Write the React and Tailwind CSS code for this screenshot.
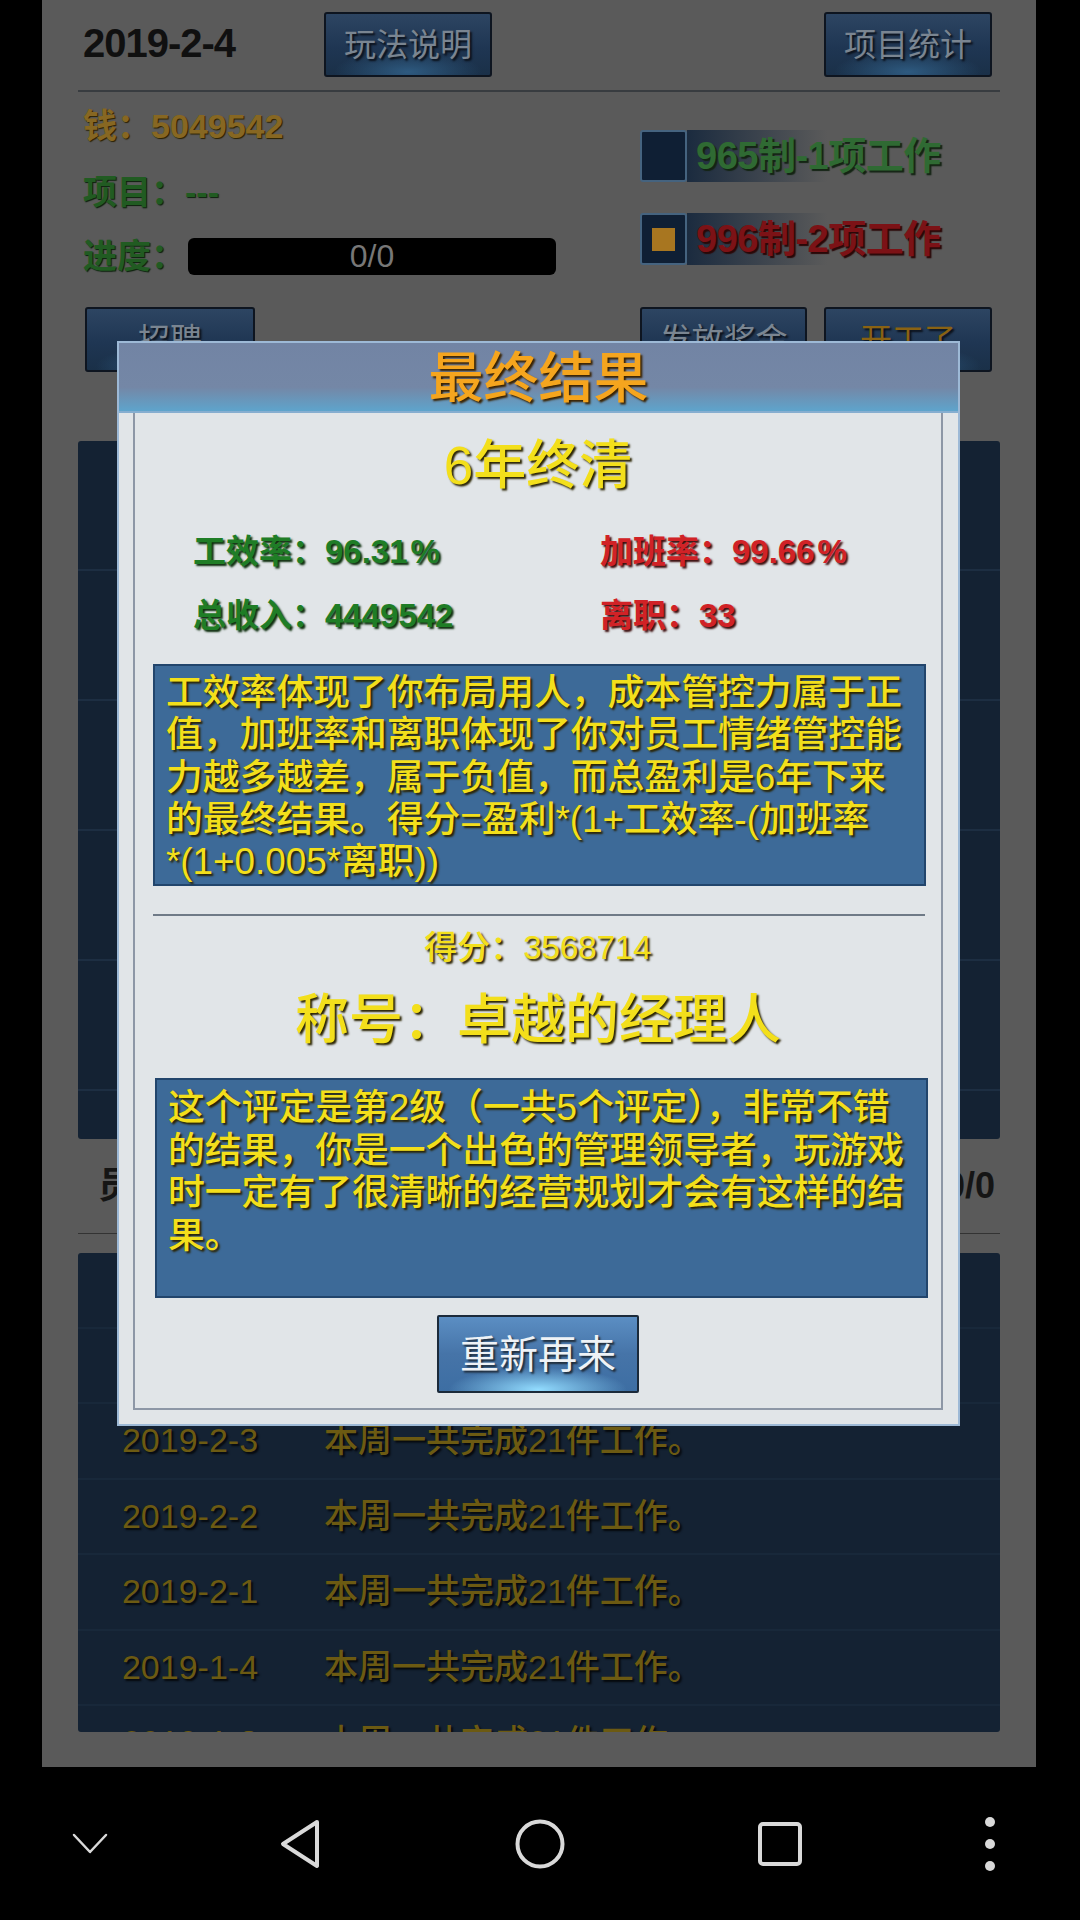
import React from "react";

const F = "font-['Liberation_Sans','Noto_Sans_CJK_SC',sans-serif]";
const YEL = "text-[#f3df1b] [text-shadow:2px_2px_2px_#2a2300]";

function DimBtn({ children, w = "w-[168px]", text = "text-[#7a8591]" }) {
  return (
    <div
      className={`${w} h-[65px] rounded-[3px] border-2 border-[#0e1520] flex items-center justify-center text-[32px] leading-none ${text} [text-shadow:2px_2px_2px_#0a0f18] [background:radial-gradient(ellipse_45%_35%_at_50%_95%,#2e5a80_0%,rgba(46,90,128,0)_100%),linear-gradient(#2d4562,#1f3653_55%,#1a3048)]`}
    >
      {children}
    </div>
  );
}

function Check({ filled, children, color, shadow }) {
  return (
    <div className="flex items-center h-[52px] relative">
      <div className="absolute left-[47px] top-0 h-[52px] w-[140px] [background:linear-gradient(90deg,#1b2b3f,rgba(90,90,90,0.2))]" />
      <div className="relative w-[47px] h-[52px] border-2 border-[#45637f] rounded-[3px] bg-[#0f1f34] flex items-center justify-center">
        {filled && <div className="w-[23px] h-[23px] bg-[#a87620]" />}
      </div>
      <div className={`relative ml-[9px] text-[38px] leading-none font-bold tracking-[-0.5px] ${color} ${shadow}`}>{children}</div>
    </div>
  );
}

function NavIcons() {
  return (
    <div className="h-[153px] flex items-center">
      <div className="w-[180px] flex justify-center">
        <svg width="36" height="22" viewBox="0 0 36 22">
          <polyline points="2,2 18,19 34,2" fill="none" stroke="#d9d9d9" strokeWidth="2.5" strokeLinejoin="round" strokeLinecap="round" />
        </svg>
      </div>
      <div className="w-[240px] flex justify-center">
        <svg width="42" height="50" viewBox="0 0 42 50">
          <path d="M38 3 L4 25 L38 47 Z" fill="none" stroke="#d9d9d9" strokeWidth="4" strokeLinejoin="round" />
        </svg>
      </div>
      <div className="w-[240px] flex justify-center">
        <svg width="50" height="50" viewBox="0 0 50 50">
          <circle cx="25" cy="25" r="22.5" fill="none" stroke="#d9d9d9" strokeWidth="4" />
        </svg>
      </div>
      <div className="w-[240px] flex justify-center">
        <svg width="44" height="44" viewBox="0 0 44 44">
          <rect x="2" y="2" width="40" height="40" rx="3" fill="none" stroke="#d9d9d9" strokeWidth="4" />
        </svg>
      </div>
      <div className="w-[180px] flex justify-center">
        <svg width="12" height="56" viewBox="0 0 12 56">
          <circle cx="6" cy="6" r="5" fill="#d9d9d9" />
          <circle cx="6" cy="28" r="5" fill="#d9d9d9" />
          <circle cx="6" cy="50" r="5" fill="#d9d9d9" />
        </svg>
      </div>
    </div>
  );
}

const logRows = [
  ["2019-2-4", "本周一共完成21件工作。"],
  ["2019-2-4", "本周一共完成21件工作。"],
  ["2019-2-3", "本周一共完成21件工作。"],
  ["2019-2-2", "本周一共完成21件工作。"],
  ["2019-2-1", "本周一共完成21件工作。"],
  ["2019-1-4", "本周一共完成21件工作。"],
  ["2019-1-3", "本周一共完成21件工作。"],
];

export default function App() {
  return (
    <div className={`w-[1080px] h-[1920px] bg-black relative overflow-hidden ${F}`}>
      {/* app area */}
      <div className="ml-[42px] w-[994px] h-[1767px] bg-[#5a5a5a] px-[36px]">
        {/* top bar */}
        <div className="flex items-start h-[90px]">
          <div className="w-[246px] pl-[5px] pt-[23px] text-[40px] leading-none font-bold text-[#101010] tracking-[-1px]">2019-2-4</div>
          <div className="mt-[12px]"><DimBtn>玩法说明</DimBtn></div>
          <div className="flex-1" />
          <div className="mt-[12px] mr-[8px]"><DimBtn>项目统计</DimBtn></div>
        </div>
        <div className="h-[2px] bg-[#383c40]" />
        {/* info */}
        <div className="h-[215px] flex">
          <div className="w-[562px] pl-[5px] flex flex-col">
            <div className="mt-[14px] h-[40px] flex items-center text-[34px] font-bold text-[#876722] [text-shadow:1px_1px_1px_#2a2000]">钱：5049542</div>
            <div className="mt-[26px] h-[40px] flex items-center text-[34px] font-bold text-[#215b22] [text-shadow:1px_1px_1px_#0c200c]">项目：---</div>
            <div className="mt-[25px] h-[38px] flex items-center">
              <span className="text-[34px] font-bold text-[#215b22] [text-shadow:1px_1px_1px_#0c200c]">进度：</span>
              <div className="ml-[3px] w-[368px] h-[37px] rounded-[6px] bg-black flex items-center justify-center text-[32px] text-[#777]">0/0</div>
            </div>
          </div>
          <div className="flex flex-col">
            <div className="mt-[38px]">
              <Check color="text-[#2f6a33]" shadow="[text-shadow:2px_2px_1px_#142414]">965制-1项工作</Check>
            </div>
            <div className="mt-[31px]">
              <Check filled color="text-[#7c1216]" shadow="[text-shadow:2px_2px_1px_#2a0808]">996制-2项工作</Check>
            </div>
          </div>
        </div>
        {/* second buttons */}
        <div className="flex h-[65px]">
          <div className="ml-[7px]"><DimBtn w="w-[170px]">招聘</DimBtn></div>
          <div className="flex-1" />
          <DimBtn w="w-[167px]">发放奖金</DimBtn>
          <div className="ml-[17px] mr-[8px]"><DimBtn w="w-[168px]" text="text-[#8a6212]">开工了</DimBtn></div>
        </div>
        {/* panel 1 */}
        <div className="mt-[69px] h-[698px] bg-[#142233] rounded-[3px] overflow-hidden flex flex-col">
          {[0, 1, 2, 3, 4, 5].map((i) => (
            <div key={i} className="h-[130px] shrink-0 border-b-2 border-[#1d2e42]" />
          ))}
        </div>
        {/* header row */}
        <div className="h-[94px] flex items-center justify-between px-[20px] pr-[5px] text-[36px] font-bold text-[#151515]">
          <span>员工</span>
          <span>0/0</span>
        </div>
        <div className="h-[1px] bg-[#333]" />
        {/* panel 2 */}
        <div className="mt-[19px] h-[479px] bg-[#142233] rounded-[3px] overflow-hidden flex flex-col">
          {logRows.map((r, i) => (
            <div key={i} className="h-[75.5px] shrink-0 flex items-center border-b-2 border-[#18283a] text-[34px] font-medium text-[#6c5a12] [text-shadow:2px_2px_2px_#05080c]">
              <div className="w-[224px] text-center">{r[0]}</div>
              <div className="ml-[22px]">{r[1]}</div>
            </div>
          ))}
        </div>
      </div>
      <NavIcons />

      {/* modal */}
      <div className="absolute left-[117px] top-[341px] w-[843px] h-[1085px] border-2 border-[#9db9d6] bg-[#e1e5e8] flex flex-col">
        <div className="h-[70px] shrink-0 flex items-center justify-center border-b-2 border-[#86aed0] [background:linear-gradient(#7284a4_0%,#7487a6_65%,#5ea4cc_100%)]">
          <span className="text-[55px] leading-none font-medium text-[#f5a51e] [text-shadow:2px_2px_2px_#3a2200] pt-[2px]">最终结果</span>
        </div>
        <div className="flex-1 ml-[14px] mr-[15px] mb-[14px] border-x-2 border-b-2 border-[#8d97a6] flex flex-col">
          <div className={`mt-[22px] h-[60px] flex items-center justify-center text-[53px] leading-none font-medium ${YEL}`}>6年终清</div>
          <div className="mt-[34px] pl-[58px] flex h-[44px] items-center text-[33px] leading-none font-bold">
            <div className="w-[407px] text-[#1f7d26] [text-shadow:2px_2px_2px_#0d2e0d]">工效率：96.31<span className="ml-[3px]">%</span></div>
            <div className="text-[#d12226] [text-shadow:2px_2px_2px_#3a0a0a]">加班率：99.66<span className="ml-[3px]">%</span></div>
          </div>
          <div className="mt-[20px] pl-[58px] flex h-[44px] items-center text-[33px] leading-none font-bold">
            <div className="w-[407px] text-[#1f7d26] [text-shadow:2px_2px_2px_#0d2e0d]">总收入：4449542</div>
            <div className="text-[#d12226] [text-shadow:2px_2px_2px_#3a0a0a]">离职：33</div>
          </div>
          <div className={`mt-[27px] ml-[18px] w-[773px] h-[222px] shrink-0 bg-[#3d6a98] border-2 border-[#22456c] pl-[11px] pt-[6px] text-[36.8px] leading-[42.3px] font-medium whitespace-nowrap ${YEL}`}>
            工效率体现了你布局用人，成本管控力属于正<br />
            值，加班率和离职体现了你对员工情绪管控能<br />
            力越多越差，属于负值，而总盈利是6年下来<br />
            的最终结果。得分=盈利*(1+工效率-(加班率<br />
            *(1+0.005*离职))
          </div>
          <div className="mt-[28px] ml-[18px] w-[772px] h-[2px] bg-[#6f7a87]" />
          <div className={`mt-[11px] h-[40px] flex items-center justify-center text-[33px] leading-none font-medium ${YEL}`}>得分：3568714</div>
          <div className={`mt-[23px] h-[60px] flex items-center justify-center text-[54px] leading-none font-medium ${YEL}`}>称号：卓越的经理人</div>
          <div className={`mt-[28px] ml-[20px] w-[773px] h-[220px] shrink-0 bg-[#3d6a98] border-2 border-[#22456c] pl-[11px] pt-[7px] text-[36.8px] leading-[42.5px] font-medium whitespace-nowrap ${YEL}`}>
            这个评定是第2级（一共5个评定），非常不错<br />
            的结果，你是一个出色的管理领导者，玩游戏<br />
            时一定有了很清晰的经营规划才会有这样的结<br />
            果。
          </div>
          <div className="mt-[17px] flex justify-center">
            <div className="w-[202px] h-[78px] border-2 border-[#1b2a3a] rounded-[2px] flex items-center justify-center text-[39px] leading-none text-[#eef2f6] [text-shadow:2px_2px_2px_#1e2a36] [background:radial-gradient(ellipse_45%_30%_at_50%_98%,#92dcff_0%,rgba(120,200,240,0)_100%),linear-gradient(#5b8ec3,#4674a8_50%,#3d6ea3)]">
              重新再来
            </div>
          </div>
        </div>
      </div>
    </div>
  );
}
